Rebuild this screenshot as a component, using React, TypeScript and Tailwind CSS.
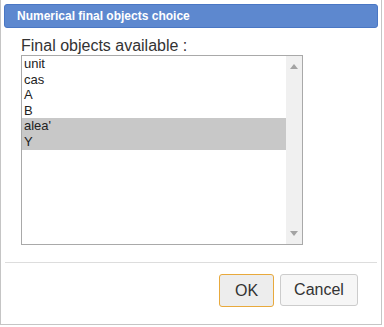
import React from 'react';

const ITEMS = [
  { label: 'unit', selected: false },
  { label: 'cas', selected: false },
  { label: 'A', selected: false },
  { label: 'B', selected: false },
  { label: "alea'", selected: true },
  { label: 'Y', selected: true },
];

export default function App() {
  return (
    <div className="w-[384px] h-[327px] bg-white" style={{ fontFamily: '"Liberation Sans", Arial, sans-serif' }}>
      <div className="w-[382px] h-[325px] border-x border-b border-[#c5c5c5] bg-white flex flex-col px-[3px] pt-[4px]">
        {/* Title bar */}
        <div className="h-[24px] rounded-[3px] border border-[#4a77c4] bg-[#5d88cf] flex items-center pl-[12px]">
          <span className="text-white text-[12px] font-bold">Numerical final objects choice</span>
        </div>

        {/* Content */}
        <div className="pl-[17px] pt-[9px]">
          <div className="text-[16px] leading-[18px] text-[#333]">Final objects available :</div>
          <div className="w-[282px] h-[190px] border border-[#a9a9a9] flex">
            <div className="flex-1 flex flex-col">
              {ITEMS.map((it) => (
                <div
                  key={it.label}
                  className={`h-[15.6px] leading-[15.6px] text-[13px] pl-[2px] text-[#222] ${it.selected ? 'bg-[#c8c8c8]' : ''}`}
                >
                  {it.label}
                </div>
              ))}
            </div>
            <div className="w-[16px] bg-[#f0f0f0] flex flex-col justify-between items-center py-[8px]">
              <svg width="8" height="5" viewBox="0 0 8 5">
                <polygon points="0,5 8,5 4,0" fill="#a3a3a3" />
              </svg>
              <svg width="8" height="5" viewBox="0 0 8 5">
                <polygon points="0,0 8,0 4,5" fill="#a3a3a3" />
              </svg>
            </div>
          </div>
        </div>

        {/* Separator */}
        <div className="mt-[17px] mx-[1px] border-t border-[#dddddd]" />

        {/* Buttons */}
        <div className="flex justify-end gap-[6px] pr-[20px] pt-[11px]">
          <button className="w-[55px] h-[33px] rounded-[3px] border border-[#e8a93c] bg-[#ededed] text-[16px] text-[#333]">
            OK
          </button>
          <button className="w-[78px] h-[32px] rounded-[3px] border border-[#cccccc] bg-[#f6f6f6] text-[16px] text-[#333]">
            Cancel
          </button>
        </div>
      </div>
    </div>
  );
}
